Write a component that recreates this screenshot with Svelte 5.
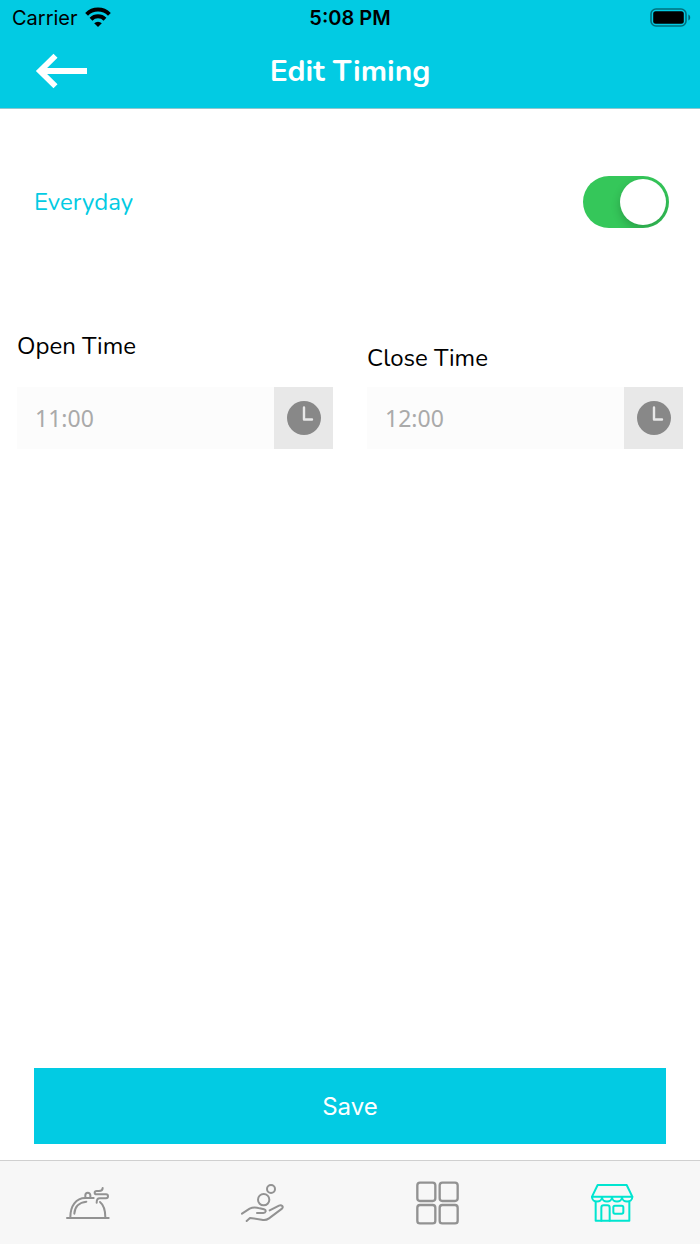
<script lang="ts">
  let everyday = $state(true);
  let openTime = $state('');
  let closeTime = $state('');
</script>

{#snippet clockIcon()}
  <svg width="36" height="36" viewBox="0 0 36 36" aria-hidden="true">
    <circle cx="18" cy="18" r="17" fill="#888" />
    <path d="M18 7.5V19.5H26" fill="none" stroke="#e8e8e8" stroke-width="2.4" stroke-linecap="round" stroke-linejoin="round" />
  </svg>
{/snippet}

<div class="screen">
  <header>
    <div class="status-bar">
      <div class="carrier">
        <span>Carrier</span>
        <svg width="26" height="22" viewBox="0 0 26 22" aria-hidden="true">
          <g fill="none" stroke="#000" stroke-width="4">
            <path d="M1.6 7.3A16.2 16.2 0 0 1 24.4 7.3" />
            <path d="M6 12.2A10 10 0 0 1 20 12.2" />
          </g>
          <path d="M13 20L9.2 16.2A5.4 5.4 0 0 1 16.8 16.2Z" />
        </svg>
      </div>
      <span class="clock">5:08 PM</span>
      <svg class="battery" width="42" height="20" viewBox="0 0 42 20" aria-hidden="true">
        <rect x="1" y="1" width="35" height="17" rx="5" fill="none" stroke="#000" stroke-opacity="0.45" stroke-width="1.6" />
        <rect x="3.2" y="3.2" width="30.6" height="12.6" rx="2.5" />
        <path d="M38.4 6.5C40.8 7.5 40.8 11.5 38.4 12.5Z" fill-opacity="0.5" />
      </svg>
    </div>

    <div class="nav-bar">
      <button class="back" type="button" aria-label="Back">
        <svg width="52" height="36" viewBox="0 0 52 36" aria-hidden="true">
          <path d="M19.5 2.8L4 18L19.5 33.2M3 18H51" fill="none" stroke="#fff" stroke-width="5.8" />
        </svg>
      </button>
      <h1>Edit Timing</h1>
    </div>
  </header>

  <main>
    <div class="everyday">
      <label for="everyday">Everyday</label>
      <input id="everyday" class="switch" type="checkbox" role="switch" bind:checked={everyday} />
    </div>

    <div class="times">
      <div class="time open">
        <label for="open-time">Open Time</label>
        <div class="field">
          <input id="open-time" type="text" placeholder="11:00" bind:value={openTime} />
          <button type="button" aria-label="Pick open time">{@render clockIcon()}</button>
        </div>
      </div>
      <div class="time">
        <label for="close-time">Close Time</label>
        <div class="field">
          <input id="close-time" type="text" placeholder="12:00" bind:value={closeTime} />
          <button type="button" aria-label="Pick close time">{@render clockIcon()}</button>
        </div>
      </div>
    </div>

    <button class="save" type="button">Save</button>
  </main>

  <nav class="tab-bar">
    <a href="#orders" aria-label="Orders">
      <svg viewBox="48 33 132 132">
        <path d="M51 144H176" />
        <path d="M61 142C61 108 78 84 106 84H131" />
        <path d="M106 82V76A7.5 7.5 0 0 1 121 76V82" />
        <path d="M73 131C74 110 88 97 109 95" />
        <path d="M150 96C161 105 166 120 166 142" />
        <path d="M158 54C158 60 154 63 147 63H140C132 63 132 73 140 73H168C176 73 176 85 168 85H149C142 85 140 90 140 98" />
      </svg>
    </a>
    <a href="#earnings" aria-label="Earnings">
      <svg viewBox="48 33 132 132">
        <circle cx="138" cy="57" r="12" />
        <circle cx="116" cy="89" r="17" />
        <path d="M51 131L74 116C84 111 94 112 104 115L117 118C125 120 123 129 115 129H96" />
        <path d="M134 121L162 107C170 104 177 110 171 116L132 145C125 150 118 151 110 149L75 144L65 153" />
      </svg>
    </a>
    <a href="#menu" aria-label="Menu">
      <svg viewBox="48 33 132 132">
        <g stroke-width="7">
          <rect x="52" y="38" width="54" height="55" rx="8" />
          <rect x="119" y="38" width="54" height="55" rx="8" />
          <rect x="52" y="105" width="54" height="55" rx="8" />
          <rect x="119" y="105" width="54" height="55" rx="8" />
        </g>
      </svg>
    </a>
    <a class="active" href="#store" aria-label="Store" aria-current="page">
      <svg viewBox="48 33 132 132">
        <path d="M68 45H155L172 80H51Z" />
        <path d="M51 81C51 99 81 99 81 81C81 99 111 99 111 81C111 99 141 99 141 81C141 99 172 99 172 81" />
        <path d="M62 96V152H163V96" />
        <path d="M79 152V113Q79 106 86 106H97Q104 106 104 113V152" />
        <rect x="115" y="107" width="30" height="24" rx="5" />
      </svg>
    </a>
  </nav>
</div>

<style>
  :global(body) {
    margin: 0;
    background: #fff;
  }

  .screen {
    display: flex;
    flex-direction: column;
    min-height: 100vh;
    font-family: 'Nunito', 'Open Sans', sans-serif;
    color: #000;
  }

  button {
    border: 0;
    padding: 0;
    cursor: pointer;
  }

  svg {
    display: block;
    overflow: visible;
  }

  header {
    background: #02cbe3;
    border-bottom: 1px solid #8fc6ce;
  }

  .status-bar {
    display: grid;
    grid-template-columns: 1fr auto 1fr;
    align-items: center;
    height: 36px;
    padding: 0 8px;
    font-family: 'Inter', sans-serif;
    font-size: 20px;
  }

  .carrier {
    display: flex;
    align-items: center;
    gap: 7px;
    padding-left: 4px;
  }

  .clock {
    font-weight: 600;
  }

  .battery {
    justify-self: end;
  }

  .nav-bar {
    display: grid;
    grid-template-columns: 1fr auto 1fr;
    align-items: center;
    height: 70px;
    padding: 0 36px 2px;
  }

  .back {
    justify-self: start;
    background: none;
  }

  h1 {
    margin: 0;
    font-size: 30px;
    font-weight: 700;
    color: #fff;
  }

  main {
    flex: 1;
    display: flex;
    flex-direction: column;
    padding-top: 67px;
  }

  .everyday {
    display: flex;
    align-items: center;
    justify-content: space-between;
    padding: 0 31px 0 34px;
    font-size: 24px;
    color: #02cbe3;
  }

  .switch {
    appearance: none;
    width: 86px;
    height: 52px;
    margin: 0;
    padding: 3px;
    box-sizing: border-box;
    overflow: hidden;
    border-radius: 26px;
    background: #e9e9ea;
    cursor: pointer;
  }

  .switch::before {
    content: '';
    display: block;
    width: 46px;
    height: 46px;
    border-radius: 50%;
    background: #fff;
    box-shadow: 0 4px 10px rgba(0, 0, 0, 0.2);
  }

  .switch:checked {
    background: #35c75a;
  }

  .switch:checked::before {
    margin-left: auto;
  }

  .times {
    display: grid;
    grid-template-columns: repeat(2, minmax(0, 1fr));
    align-items: end;
    gap: 34px;
    padding: 0 17px;
    margin-top: 102px;
  }

  .time {
    display: flex;
    flex-direction: column;
    gap: 12px;
    font-size: 24px;
    line-height: 33px;
  }

  .time.open {
    gap: 24px;
  }

  .field {
    display: flex;
    height: 62px;
  }

  .field input {
    flex: 1;
    min-width: 0;
    border: 0;
    padding: 0 18px;
    background: #fcfcfc;
    font-family: 'Noto Sans', sans-serif;
    font-size: 23px;
    color: #000;
  }

  .field input::placeholder {
    color: #aaa;
    opacity: 1;
  }

  .field button {
    display: flex;
    align-items: center;
    justify-content: center;
    width: 59px;
    background: #e8e8e8;
  }

  .save {
    height: 76px;
    margin: auto 34px 16px;
    background: #02cbe3;
    font-family: 'Inter', sans-serif;
    font-size: 24px;
    color: #fff;
  }

  .tab-bar {
    display: grid;
    grid-template-columns: repeat(4, 1fr);
    height: 83px;
    border-top: 1px solid #d0d0d0;
    background: #f7f7f7;
  }

  .tab-bar a {
    display: flex;
    align-items: center;
    justify-content: center;
    color: #929292;
  }

  .tab-bar a.active {
    color: #00e5d0;
  }

  .tab-bar svg {
    width: 44px;
    height: 44px;
    fill: none;
    stroke: currentColor;
    stroke-width: 6;
    stroke-linecap: round;
    stroke-linejoin: round;
  }
</style>
